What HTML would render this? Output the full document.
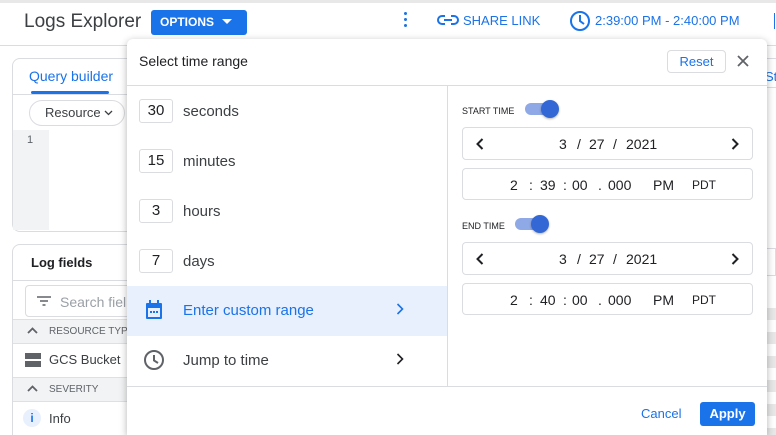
<!DOCTYPE html>
<html style="overflow:hidden;width:776px;height:435px"><head><style>
*{box-sizing:border-box;margin:0;padding:0}
body{width:776px;height:435px;overflow:hidden;background:#fff;font-family:"Liberation Sans",Arial,sans-serif;position:relative;color:#3c4043}
.a{position:absolute}
.blue{color:#1a73e8}
.num{position:absolute;left:12px;width:34px;height:24px;border:1px solid #dadce0;border-radius:3px;font-size:15px;text-align:center;line-height:22px;color:#202124}
.lbl{position:absolute;left:56px;font-size:15px;color:#3c4043}
.row{position:absolute;left:0;width:320px;height:50px}
.box{position:absolute;left:335px;width:291px;border:1px solid #dadce0;border-radius:4px;font-size:14px;color:#202124}
.box span{position:absolute;top:8px}
.tog{position:absolute;width:32px;height:12px;border-radius:6px;background:#8fa9e6}
.tog::after{content:"";position:absolute;right:-2px;top:-3px;width:18px;height:18px;border-radius:50%;background:#3367d6;box-shadow:0 1px 2px rgba(0,0,0,.3)}
.sm{font-size:9px;color:#202124;position:absolute}
.hdr{white-space:nowrap;overflow:hidden}
</style></head><body>
<div class="a" style="left:0;top:0;width:776px;height:3px;background:#e8e8e8"></div>
<div class="a" style="left:24px;top:11px;font-size:19px;color:#3c4043">Logs Explorer</div>
<div class="a" style="left:151px;top:10px;width:96px;height:25px;background:#1a73e8;border-radius:3px;color:#fff;font-size:12px;font-weight:bold;line-height:25px;padding-left:9px">OPTIONS</div>
<svg class="a" style="left:222px;top:19px" width="10" height="6" viewBox="0 0 10 6"><path d="M0 0h10L5 5z" fill="#fff"/></svg>
<div class="a" style="left:404px;top:12px;width:3px;height:3px;background:#1a73e8;border-radius:50%;box-shadow:0 6px 0 #1a73e8,0 12px 0 #1a73e8"></div>
<svg class="a" style="left:437px;top:13px" width="22" height="14" viewBox="0 0 22 14"><path d="M8 3H5a4 4 0 0 0 0 8h3M14 3h3a4 4 0 0 1 0 8h-3M7 7h8" stroke="#1a73e8" stroke-width="2" fill="none"/></svg>
<div class="a blue" style="left:463px;top:13px;font-size:13px">SHARE LINK</div>
<svg class="a" style="left:569px;top:10px" width="22" height="22" viewBox="0 0 22 22"><circle cx="11" cy="11" r="9" stroke="#1a73e8" stroke-width="2" fill="none"/><path d="M11 5v6l4 3" stroke="#1a73e8" stroke-width="2" fill="none"/></svg>
<div class="a blue" style="left:595px;top:13px;font-size:13px">2:39:00 PM - 2:40:00 PM</div>
<div class="a" style="left:774px;top:13px;width:1px;height:16px;background:#1a73e8"></div>
<div class="a" style="left:0;top:45px;width:776px;height:1px;background:#dadce0"></div>
<div class="a" style="left:12px;top:58px;width:200px;height:174px;border:1px solid #dadce0;border-radius:8px"></div>
<div class="a" style="left:29px;top:68px;font-size:14px;color:#1a73e8">Query builder</div>
<div class="a" style="left:31px;top:91px;width:78px;height:3px;background:#1a73e8;border-radius:2px"></div>
<div class="a" style="left:12px;top:94px;width:200px;height:1px;background:#dadce0"></div>
<div class="a" style="left:29px;top:100px;width:96px;height:26px;border:1px solid #dadce0;border-radius:13px;font-size:13px;line-height:24px;padding-left:15px;color:#3c4043">Resource</div>
<svg class="a" style="left:104px;top:110px" width="9" height="6" viewBox="0 0 9 6"><path d="M1 1l3.5 3.5L8 1" stroke="#3c4043" stroke-width="1.3" fill="none"/></svg>
<div class="a" style="left:13px;top:130px;width:36px;height:100px;background:#f1f3f4;font-size:11px;color:#5f6368;padding:4px 0 0 14px">1</div>
<div class="a" style="left:12px;top:244px;width:200px;height:200px;border:1px solid #dadce0;border-radius:8px"></div>
<div class="a" style="left:31px;top:255px;font-size:13px;font-weight:bold;color:#202124">Log fields</div>
<div class="a" style="left:12px;top:280px;width:200px;height:1px;background:#dadce0"></div>
<div class="a" style="left:25px;top:285px;width:120px;height:32px;border:1px solid #dadce0;border-radius:4px"></div>
<svg class="a" style="left:37px;top:296px" width="14" height="10" viewBox="0 0 14 10"><path d="M0 1h14M3 5h8M5.5 9h3" stroke="#5f6368" stroke-width="1.6"/></svg>
<div class="a" style="left:60px;top:294px;font-size:14px;color:#9aa0a6">Search fiel</div>
<div class="a hdr" style="left:13px;top:319px;width:120px;height:25px;background:#f1f3f4;border-top:1px solid #e0e0e0;border-bottom:1px solid #e0e0e0;font-size:10px;color:#5f6368;line-height:23px;padding-left:36px">RESOURCE TYPE</div>
<svg class="a" style="left:27px;top:327px" width="11" height="7" viewBox="0 0 11 7"><path d="M1 6l4.5-4.5L10 6" stroke="#5f6368" stroke-width="1.8" fill="none"/></svg>
<div class="a" style="left:25px;top:353px;width:16px;height:6px;background:#5f6368"></div>
<div class="a" style="left:25px;top:361px;width:16px;height:6px;background:#5f6368"></div>
<div class="a" style="left:49px;top:352px;font-size:13px;color:#3c4043">GCS Bucket</div>
<div class="a hdr" style="left:13px;top:377px;width:120px;height:25px;background:#f1f3f4;border-top:1px solid #e0e0e0;border-bottom:1px solid #e0e0e0;font-size:10px;color:#5f6368;line-height:23px;padding-left:36px">SEVERITY</div>
<svg class="a" style="left:27px;top:385px" width="11" height="7" viewBox="0 0 11 7"><path d="M1 6l4.5-4.5L10 6" stroke="#5f6368" stroke-width="1.8" fill="none"/></svg>
<div class="a" style="left:23px;top:409px;width:18px;height:18px;border-radius:50%;background:#e8f0fe;color:#1a73e8;font-size:12px;font-weight:bold;text-align:center;line-height:18px">i</div>
<div class="a" style="left:49px;top:411px;font-size:13px;color:#3c4043">Info</div>
<div class="a" style="left:765px;top:58px;width:11px;height:30px;border-top:1px solid #dadce0;border-bottom:1px solid #dadce0"></div>
<div class="a blue" style="left:765px;top:69px;font-size:13px">St</div>
<div class="a" style="left:765px;top:248px;width:11px;height:28px;border:1px solid #dadce0"></div>
<div class="a" style="left:765px;top:308px;width:11px;height:127px;background:repeating-linear-gradient(#e8e8e8 0 12px,#fff 12px 24px)"></div>
<div class="a" style="left:127px;top:39px;width:640px;height:396px;background:#fff;border-radius:6px 6px 0 0;box-shadow:0 2px 8px rgba(0,0,0,.3)">
<div class="a" style="left:12px;top:14px;font-size:14px;color:#202124">Select time range</div>
<div class="a" style="left:540px;top:11px;width:59px;height:23px;border:1px solid #dadce0;border-radius:4px;font-size:13px;color:#1a73e8;text-align:center;line-height:21px">Reset</div>
<svg class="a" style="left:609px;top:15px" width="14" height="14" viewBox="0 0 14 14"><path d="M2 2l10 10M12 2L2 12" stroke="#5f6368" stroke-width="1.8"/></svg>
<div class="a" style="left:0;top:46px;width:640px;height:1px;background:#dadce0"></div>
<div class="a" style="left:320px;top:46px;width:1px;height:301px;background:#dadce0"></div>
<div class="a" style="left:0;top:347px;width:640px;height:1px;background:#dadce0"></div>
<div class="row" style="top:47px"><div class="num" style="top:13px">30</div><div class="lbl" style="top:17px">seconds</div></div>
<div class="row" style="top:97px"><div class="num" style="top:13px">15</div><div class="lbl" style="top:17px">minutes</div></div>
<div class="row" style="top:147px"><div class="num" style="top:13px">3</div><div class="lbl" style="top:17px">hours</div></div>
<div class="row" style="top:197px"><div class="num" style="top:13px">7</div><div class="lbl" style="top:17px">days</div></div>
<div class="row" style="top:247px;background:#e8f0fe">
<svg class="a" style="left:18px;top:14px" width="18" height="20" viewBox="0 0 18 20"><rect x="1" y="3" width="16" height="16" rx="1" fill="#1a73e8"/><rect x="3" y="8" width="12" height="9" fill="#e8f0fe"/><rect x="4" y="0" width="2" height="4" fill="#1a73e8"/><rect x="12" y="0" width="2" height="4" fill="#1a73e8"/><rect x="5" y="11" width="2" height="2" fill="#1a73e8"/><rect x="8" y="11" width="2" height="2" fill="#1a73e8"/><rect x="11" y="11" width="2" height="2" fill="#1a73e8"/></svg>
<div class="lbl blue" style="top:16px;color:#1a73e8">Enter custom range</div>
<svg class="a" style="left:269px;top:17px" width="8" height="12" viewBox="0 0 8 12"><path d="M1.5 1l5 5-5 5" stroke="#1a73e8" stroke-width="1.6" fill="none"/></svg></div>
<div class="row" style="top:297px">
<svg class="a" style="left:16px;top:13px" width="22" height="22" viewBox="0 0 22 22"><circle cx="11" cy="11" r="9" stroke="#5f6368" stroke-width="2" fill="none"/><path d="M11 6v5.5l4 2.5" stroke="#5f6368" stroke-width="2" fill="none"/></svg>
<div class="lbl" style="top:16px">Jump to time</div>
<svg class="a" style="left:269px;top:17px" width="8" height="12" viewBox="0 0 8 12"><path d="M1.5 1l5 5-5 5" stroke="#202124" stroke-width="1.6" fill="none"/></svg></div>
<div class="sm" style="left:335px;top:67px">START TIME</div>
<div class="tog" style="left:398px;top:64px"></div>
<div class="box" style="top:88px;height:33px">
<svg class="a" style="left:13px;top:10px" width="8" height="12" viewBox="0 0 8 12"><path d="M6.5 1l-5 5 5 5" stroke="#202124" stroke-width="2" fill="none"/></svg>
<span style="left:96px">3</span><span style="left:114px">/</span><span style="left:126px">27</span><span style="left:150px">/</span><span style="left:163px">2021</span>
<svg class="a" style="right:13px;top:10px" width="8" height="12" viewBox="0 0 8 12"><path d="M1.5 1l5 5-5 5" stroke="#202124" stroke-width="2" fill="none"/></svg></div>
<div class="box" style="top:129px;height:32px"><span style="left:47px">2</span><span style="left:66px">:</span><span style="left:77px">39</span><span style="left:100px">:</span><span style="left:109px">00</span><span style="left:135px">.</span><span style="left:145px">000</span><span style="left:190px">PM</span><span style="left:229px;font-size:12px;top:9px">PDT</span></div>
<div class="sm" style="left:335px;top:182px">END TIME</div>
<div class="tog" style="left:388px;top:179px"></div>
<div class="box" style="top:203px;height:33px">
<svg class="a" style="left:13px;top:10px" width="8" height="12" viewBox="0 0 8 12"><path d="M6.5 1l-5 5 5 5" stroke="#202124" stroke-width="2" fill="none"/></svg>
<span style="left:96px">3</span><span style="left:114px">/</span><span style="left:126px">27</span><span style="left:150px">/</span><span style="left:163px">2021</span>
<svg class="a" style="right:13px;top:10px" width="8" height="12" viewBox="0 0 8 12"><path d="M1.5 1l5 5-5 5" stroke="#202124" stroke-width="2" fill="none"/></svg></div>
<div class="box" style="top:244px;height:32px"><span style="left:47px">2</span><span style="left:66px">:</span><span style="left:77px">40</span><span style="left:100px">:</span><span style="left:109px">00</span><span style="left:135px">.</span><span style="left:145px">000</span><span style="left:190px">PM</span><span style="left:229px;font-size:12px;top:9px">PDT</span></div>
<div class="a blue" style="left:514px;top:367px;font-size:13px">Cancel</div>
<div class="a" style="left:573px;top:363px;width:55px;height:24px;background:#1a73e8;border-radius:3px;color:#fff;font-size:13px;font-weight:bold;text-align:center;line-height:24px">Apply</div>
</div>
</body></html>
